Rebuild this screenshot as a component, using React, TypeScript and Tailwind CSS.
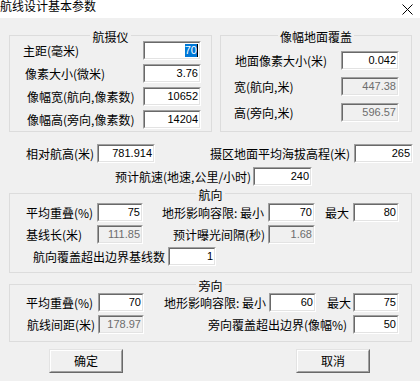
import React from "react";

type EditProps = {
  value: string;
  w: string;
  disabled?: boolean;
  selected?: boolean;
};

const Edit = ({ value, w, disabled, selected }: EditProps) => (
  <div
    className={`${w} h-[19px] shrink-0 border border-t-[#a0a0a0] border-l-[#a0a0a0] border-b-white border-r-white`}
  >
    <div
      className={`h-full flex items-center justify-end pr-[1px] border border-t-[#696969] border-l-[#696969] border-b-[#e3e3e3] border-r-[#e3e3e3] font-['Liberation_Sans',sans-serif] text-[11px] leading-[13px] ${
        disabled ? "bg-[#f0f0f0] text-[#6d6d6d]" : "bg-white text-black"
      }`}
    >
      {selected ? (
        <>
          <span className="bg-[#0078d7] text-white">{value}</span>
          <span className="w-px h-[13px] bg-black" />
        </>
      ) : (
        <span>{value}</span>
      )}
    </div>
  </div>
);

const Group = ({
  title,
  className,
  children,
}: {
  title: string;
  className: string;
  children: React.ReactNode;
}) => (
  <div className={`border border-[#dcdcdc] shrink-0 ${className}`}>
    <div className="h-0 flex justify-center">
      <span className="-mt-[5px] h-[12px] leading-[12px] px-[2px] bg-[#f0f0f0] whitespace-nowrap">
        {title}
      </span>
    </div>
    {children}
  </div>
);

const Button = ({ label, ml }: { label: string; ml: string }) => (
  <div
    className={`${ml} w-[74px] h-[24px] shrink-0 border border-t-[#e3e3e3] border-l-[#e3e3e3] border-b-[#696969] border-r-[#696969]`}
  >
    <div className="h-full flex items-center justify-center border border-t-white border-l-white border-b-[#a0a0a0] border-r-[#a0a0a0] leading-[12px]">
      {label}
    </div>
  </div>
);

export default function App() {
  return (
    <div className="w-[420px] h-[381px] overflow-hidden bg-[#f0f0f0] text-black text-[12px] font-['Noto_Sans_CJK_SC',sans-serif]">
      {/* title bar */}
      <div className="h-[18px] bg-white flex items-start justify-between">
        <span className="leading-[12px]">航线设计基本参数</span>
        <svg className="mt-[4px] mr-[7px]" width="11" height="11" viewBox="0 0 11 11">
          <path d="M0.5 0.5L10.5 10.5M10.5 0.5L0.5 10.5" stroke="#000" strokeWidth="1" fill="none" />
        </svg>
      </div>

      {/* camera + ground coverage */}
      <div className="flex mt-[17px] pl-[9px]">
        <Group title="航摄仪" className="w-[203px] h-[97px]">
          <div className="flex flex-col gap-[4px] pt-[5px] pr-[10px]">
            <div className="flex items-center">
              <span className="flex-1 pl-[13px] leading-[12px] whitespace-nowrap">主距(毫米)</span>
              <Edit w="w-[58px]" value="70" selected />
            </div>
            <div className="flex items-center">
              <span className="flex-1 pl-[15px] leading-[12px] whitespace-nowrap">像素大小(微米)</span>
              <Edit w="w-[58px]" value="3.76" />
            </div>
            <div className="flex items-center">
              <span className="flex-1 pl-[17px] leading-[12px] whitespace-nowrap">像幅宽(航向,像素数)</span>
              <Edit w="w-[58px]" value="10652" />
            </div>
            <div className="flex items-center">
              <span className="flex-1 pl-[17px] leading-[12px] whitespace-nowrap">像幅高(旁向,像素数)</span>
              <Edit w="w-[58px]" value="14204" />
            </div>
          </div>
        </Group>

        <Group title="像幅地面覆盖" className="ml-[8px] w-[192px] h-[97px]">
          <div className="flex flex-col gap-[7px] pt-[15px] pr-[12px]">
            <div className="flex items-center">
              <span className="flex-1 pl-[14px] leading-[12px] whitespace-nowrap">地面像素大小(米)</span>
              <Edit w="w-[58px]" value="0.042" />
            </div>
            <div className="flex items-center">
              <span className="flex-1 pl-[13px] leading-[12px] whitespace-nowrap">宽(航向,米)</span>
              <Edit w="w-[58px]" value="447.38" disabled />
            </div>
            <div className="flex items-center">
              <span className="flex-1 pl-[13px] leading-[12px] whitespace-nowrap">高(旁向,米)</span>
              <Edit w="w-[58px]" value="596.57" disabled />
            </div>
          </div>
        </Group>
      </div>

      {/* flight height / speed */}
      <div className="flex items-center mt-[12px] pl-[26px]">
        <span className="w-[71px] shrink-0 leading-[12px] whitespace-nowrap">相对航高(米)</span>
        <Edit w="w-[58px]" value="781.914" />
        <span className="ml-[55px] w-[144px] shrink-0 leading-[12px] whitespace-nowrap">
          摄区地面平均海拔高程(米)
        </span>
        <Edit w="w-[59px]" value="265" />
      </div>
      <div className="flex items-center mt-[4px] pl-[115px]">
        <span className="w-[138px] shrink-0 leading-[12px] whitespace-nowrap">预计航速(地速,公里/小时)</span>
        <Edit w="w-[59px]" value="240" />
      </div>

      {/* forward overlap */}
      <Group title="航向" className="mt-[7px] ml-[9px] w-[403px] h-[80px]">
        <div className="flex flex-col gap-[3px] pt-[9px]">
          <div className="flex items-center pl-[16px]">
            <span className="w-[71px] shrink-0 leading-[12px] whitespace-nowrap">平均重叠(%)</span>
            <Edit w="w-[46px]" value="75" />
            <span className="ml-[19px] w-[106px] shrink-0 leading-[12px] whitespace-nowrap">地形影响容限: 最小</span>
            <Edit w="w-[47px]" value="70" />
            <span className="ml-[10px] w-[28px] shrink-0 leading-[12px] whitespace-nowrap">最大</span>
            <Edit w="w-[46px]" value="80" />
          </div>
          <div className="flex items-center pl-[16px]">
            <span className="w-[71px] shrink-0 leading-[12px] whitespace-nowrap">基线长(米)</span>
            <Edit w="w-[46px]" value="111.85" disabled />
            <span className="ml-[30px] w-[95px] shrink-0 leading-[12px] whitespace-nowrap">预计曝光间隔(秒)</span>
            <Edit w="w-[47px]" value="1.68" disabled />
          </div>
          <div className="flex items-center pl-[23px]">
            <span className="w-[135px] shrink-0 leading-[12px] whitespace-nowrap">航向覆盖超出边界基线数</span>
            <Edit w="w-[48px]" value="1" />
          </div>
        </div>
      </Group>

      {/* side overlap */}
      <Group title="旁向" className="mt-[11px] ml-[9px] w-[403px] h-[58px]">
        <div className="flex flex-col gap-[3px] pt-[8px]">
          <div className="flex items-center pl-[16px]">
            <span className="w-[72px] shrink-0 leading-[12px] whitespace-nowrap">平均重叠(%)</span>
            <Edit w="w-[46px]" value="70" />
            <span className="ml-[20px] w-[105px] shrink-0 leading-[12px] whitespace-nowrap">地形影响容限: 最小</span>
            <Edit w="w-[47px]" value="60" />
            <span className="ml-[11px] w-[26px] shrink-0 leading-[12px] whitespace-nowrap">最大</span>
            <Edit w="w-[46px]" value="75" />
          </div>
          <div className="flex items-center pl-[17px]">
            <span className="w-[71px] shrink-0 leading-[12px] whitespace-nowrap">航线间距(米)</span>
            <Edit w="w-[46px]" value="178.97" disabled />
            <span className="ml-[64px] w-[145px] shrink-0 leading-[12px] whitespace-nowrap">
              旁向覆盖超出边界(像幅%)
            </span>
            <Edit w="w-[46px]" value="50" />
          </div>
        </div>
      </Group>

      {/* buttons */}
      <div className="flex mt-[7px]">
        <Button label="确定" ml="ml-[49px]" />
        <Button label="取消" ml="ml-[173px]" />
      </div>
    </div>
  );
}
